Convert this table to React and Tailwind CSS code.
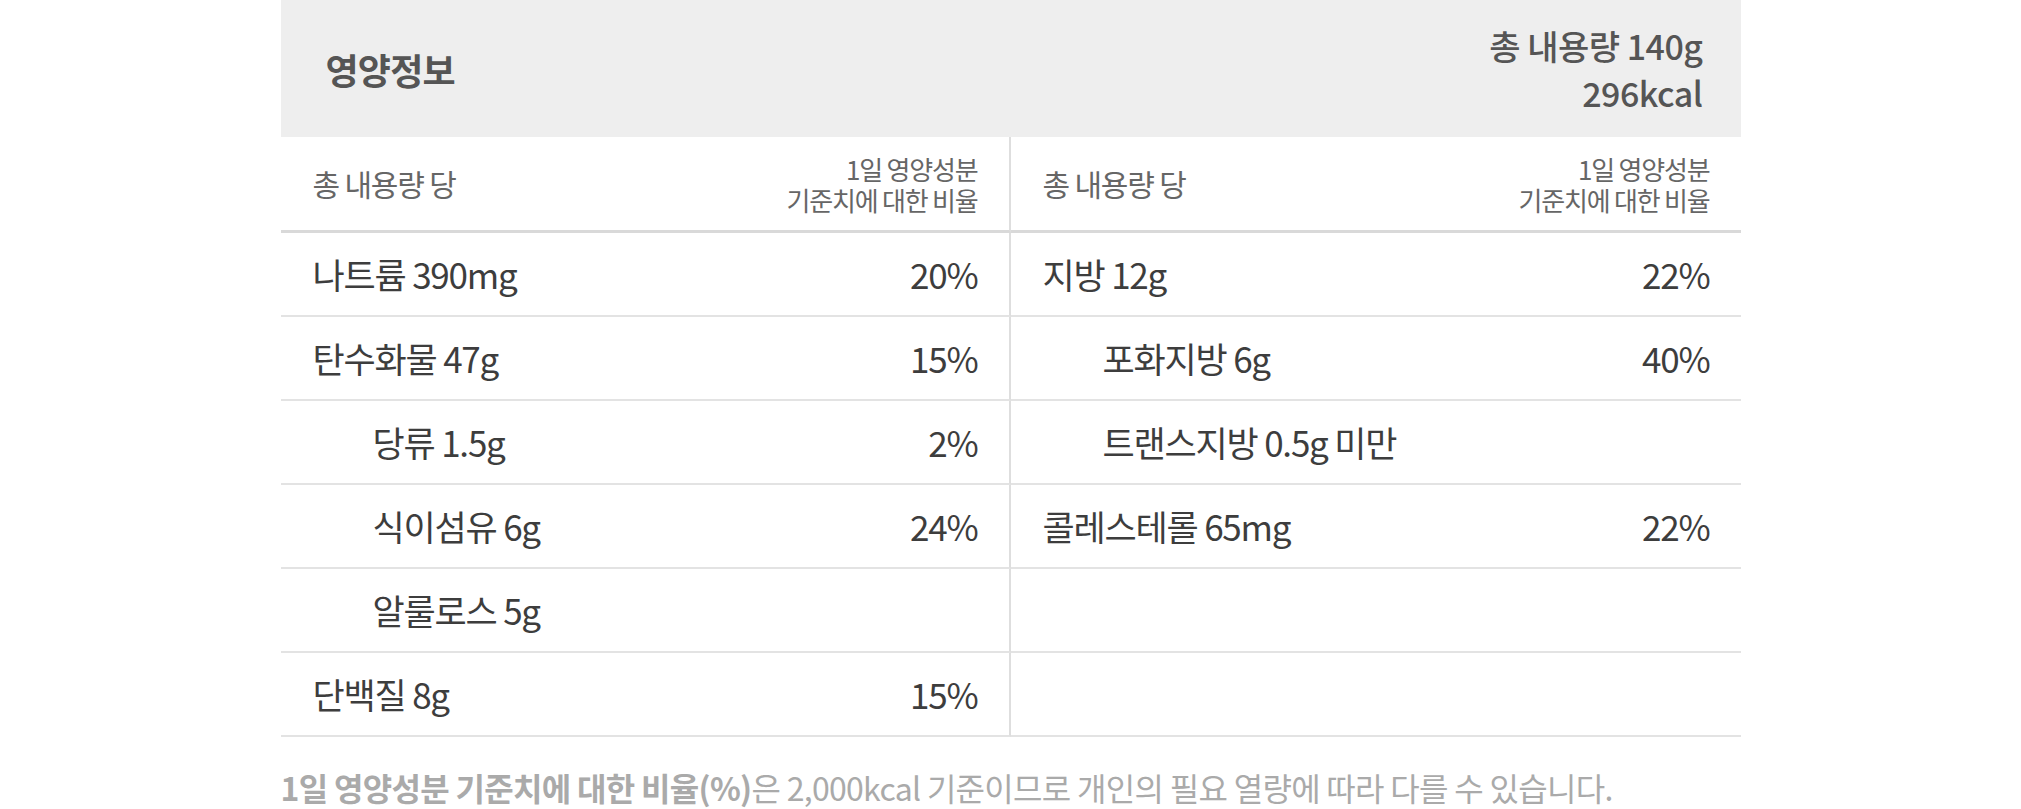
import React from "react";

const font = { fontFamily: '"Noto Sans CJK KR", "Noto Sans", sans-serif' };

const left = [
  { name: "나트륨 390mg", pct: "20%" },
  { name: "탄수화물 47g", pct: "15%" },
  { name: "당류 1.5g", pct: "2%", indent: true },
  { name: "식이섬유 6g", pct: "24%", indent: true },
  { name: "알룰로스 5g", pct: "", indent: true },
  { name: "단백질 8g", pct: "15%" },
];

const right = [
  { name: "지방 12g", pct: "22%" },
  { name: "포화지방 6g", pct: "40%", indent: true },
  { name: "트랜스지방 0.5g 미만", pct: "", indent: true },
  { name: "콜레스테롤 65mg", pct: "22%" },
  null,
  null,
];

function Cell({ item, isLeft }) {
  return (
    <div
      className={
        "flex items-center justify-between h-[84px] border-b-2 border-[#e3e3e3] pl-8 pr-[31px] " +
        (isLeft ? "border-r-2 border-r-[#dedede]" : "")
      }
    >
      {item ? (
        <>
          <span
            className={
              "text-[35px] tracking-[-1.2px] text-[#3d3d3d] " +
              (item.indent ? "pl-[60px]" : "")
            }
          >
            {item.name}
          </span>
          <span className="text-[35px] tracking-[-1.2px] text-[#3d3d3d]">{item.pct}</span>
        </>
      ) : null}
    </div>
  );
}

function SubHead({ isLeft }) {
  return (
    <div
      className={
        "flex items-center justify-between h-[96px] border-b-[3px] border-[#d9d9d9] pl-8 pr-[31px] " +
        (isLeft ? "border-r-2 border-r-[#dedede]" : "")
      }
    >
      <span className="text-[30px] tracking-[-1.2px] text-[#666]">총 내용량 당</span>
      <span className="flex flex-col items-end text-[26px] leading-[31px] tracking-[-1.2px] text-[#666]">
        <span>1일 영양성분</span>
        <span>기준치에 대한 비율</span>
      </span>
    </div>
  );
}

export default function App() {
  return (
    <div className="w-[2021px] h-[809px] bg-white" style={font}>
      <div className="mx-auto w-[1460px]">
        <div className="flex items-center justify-between h-[137px] bg-[#eeeeee] pl-[45px] pr-[38px]">
          <span className="text-[36px] font-bold tracking-[-0.8px] text-[#555]">영양정보</span>
          <span className="flex flex-col items-end text-[34px] leading-[47px] font-medium tracking-[-0.5px] text-[#555]">
            <span>총 내용량 140g</span>
            <span>296kcal</span>
          </span>
        </div>
        <div className="grid grid-cols-2">
          <SubHead isLeft />
          <SubHead />
          {left.map((l, i) => (
            <React.Fragment key={i}>
              <Cell item={l} isLeft />
              <Cell item={right[i]} />
            </React.Fragment>
          ))}
        </div>
        <p className="mt-[26px] text-[32px] tracking-[-0.7px] text-[#aaaaaa]">
          <span className="font-bold">1일 영양성분 기준치에 대한 비율(%)</span>은 2,000kcal 기준이므로 개인의 필요 열량에 따라 다를 수 있습니다.
        </p>
      </div>
    </div>
  );
}
